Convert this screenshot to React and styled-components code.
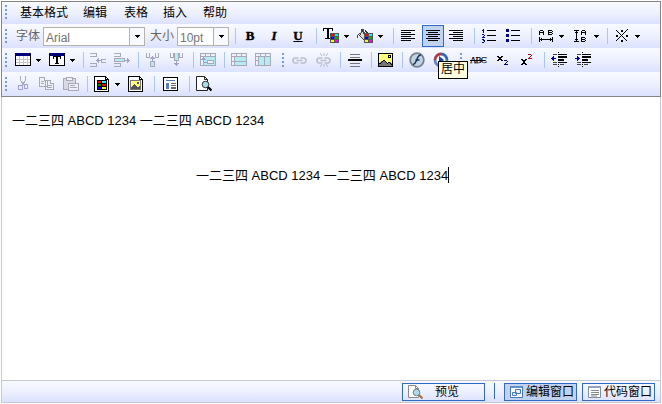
import React from "react";
import styled, { createGlobalStyle, css } from "styled-components";

const Global = createGlobalStyle`
  html, body { margin: 0; background: #fff; }
  * { box-sizing: border-box; }
  body { font-family: "Liberation Sans", "Noto Sans CJK SC", sans-serif; overflow: hidden; }
`;
const Editor = styled.div`
  position: relative; width: 660px; height: 402px; margin: 1px 0 0 1px;
  display: flex; flex-direction: column;
`;
const Toolbars = styled.header`
  border: 1px solid #858585; height: 96px; display: flex; flex-direction: column;
`;
const band = css`background: linear-gradient(#f9faff, #eceffe 55%, #dbe1ff);`;
const Row = styled.div`
  ${band}
  height: ${p => p.$h || 24}px; display: flex; align-items: flex-start; flex: none;
  padding: ${p => p.$top ?? 4}px 0 0 3px;
`;
const Grip = styled.i`
  width: 2px; height: 14px; margin: 1px 0 0 ${p => p.$gap || 0}px; flex: none;
  background: repeating-linear-gradient(#7698df 0 2px, transparent 2px 4px);
`;
const Sep = styled.i`
  width: 1px; height: 16px; flex: none; margin-left: ${p => p.$gap}px; background: #a9c6f5;
`;
const Svg = styled.svg`
  width: 16px; height: 16px; flex: none; margin-left: ${p => p.$gap || 0}px; display: block;
`;
const MenuItem = styled.span`
  font-size: 12px; line-height: 18px; height: 16px; margin-left: ${p => p.$gap}px;
  width: ${p => p.$w}px; white-space: nowrap; color: #000; flex: none;
`;
const Label = styled(MenuItem)`color: #666; line-height: 17px;`;
const Select = styled.div`
  width: ${p => p.$w}px; height: 19px; margin: -1px 0 0 ${p => p.$gap}px; flex: none;
  border: 1px solid #b5b2a8; background: #fff; display: flex; font-size: 12px; line-height: 20px; color: #737373;
`;
const Value = styled.span`flex: 1; padding-left: 2px;`;
const Drop = styled.span`
  width: 15px; border-left: 1px solid #b5b2a8; display: flex; justify-content: center; padding-top: 7px;
  background: #f7f9ff;
`;
const ArrowSvg = styled.svg`
  width: 5px; height: 3px; flex: none; margin: ${p => p.$top ?? 7}px 0 0 ${p => p.$gap || 0}px; display: block;
`;
const Glyph = styled.span`
  font: bold 13px/16px "Liberation Serif", serif; width: 10px; height: 16px; text-align: center; flex: none;
  margin-left: ${p => p.$gap}px; -webkit-text-stroke: .4px #000;
  font-style: ${p => (p.$italic ? "italic" : "normal")};
  text-decoration: ${p => (p.$underline ? "underline" : "none")};
`;
const Active = styled.span`
  width: 22px; height: 22px; margin: -3px 0 0 ${p => p.$gap}px; padding: 2px 3px; flex: none;
  border: 1px solid #316ac5; background: #c1d2ee;
`;
const Content = styled.main`
  height: 283px; border: 1px solid #c4c8d6; border-top: 0; border-bottom: 0; background: #fff;
  font-size: 13px; line-height: 16px; color: #000; white-space: nowrap; padding: 16px 0 0 10px;
`;
const Line = styled.p`
  margin: 0; height: 55px; padding-left: ${p => p.$indent || 0}px; display: flex;
`;
const Caret = styled.i`width: 1px; height: 16px; margin-top: -1px; background: #000;`;
const Status = styled.footer`
  ${band}
  height: 23px; border: 1px solid #c4c8d6; display: flex; padding: 2px 5px 0; justify-content: flex-end;
`;
const Tab = styled.button`
  width: ${p => p.$w}px; height: 18px; border: 1px solid #316ac5; margin: 0 0 0 ${p => p.$gap}px;
  background: ${p => (p.$on ? "#c1d2ee" : "transparent")}; padding: 0 0 0 ${p => p.$pad}px;
  font: 12px/16px "Liberation Sans", "Noto Sans CJK SC", sans-serif; color: #000;
  display: flex; white-space: nowrap; flex: none;
`;
const TabText = styled.span`margin-left: ${p => p.$gap}px; line-height: 17px;`;
const Divider = styled.i`width: 1px; height: 16px; margin: 0 0 0 9px; background: #316ac5;`;
const Tip = styled.div`
  position: absolute; left: 437px; top: 60px; width: 30px; height: 18px; border: 1px solid #000;
  background: #ffffe1; font-size: 12px; line-height: 15px; text-align: center;
`;

const Icon = ({ gap, smooth, children }) => (
  <Svg $gap={gap} viewBox="0 0 16 16" fill="none" stroke="#000"
    shapeRendering={smooth ? "auto" : "crispEdges"}>{children}</Svg>
);
const Arrow = ({ gap, top }) => (
  <ArrowSvg $gap={gap} $top={top} viewBox="0 0 5 3" shapeRendering="crispEdges">
    <path d="M0 0h5v1H4v1H3v1H2V2H1V1H0z" />
  </ArrowSvg>
);
const G = "#a9a9b6", C = "#b4ecf5", V = "#a3a0d2";

const Swatches = ({ x, y }) => (
  <g stroke="none" transform={`translate(${x} ${y})`}>
    <path fill="#555" d="M0 0h9v10H0z" />
    <path fill="#f00" d="M1 1h3v2H1z" /><path fill="#0ff" d="M5 1h3v2H5z" />
    <path fill="#00f" d="M1 4h3v2H1z" /><path fill="#0b0" d="M5 4h3v2H5z" />
    <path fill="#ff0" d="M1 7h3v2H1z" /><path fill="#f0f" d="M5 7h3v2H5z" />
  </g>
);
const TextColor = p => <Icon {...p}>
  <path fill="#000" stroke="none" d="M0 0h10v3H9V1H6v9h2v1H2v-1h2V1H1v2H0z" /><Swatches x={7} y={5} />
</Icon>;
const Bucket = p => <Icon {...p}>
  <path stroke="none" fill="#ddd" d="M5 2l5 5-4 4-4-4z" />
  <path stroke="#444" d="M4.500 5V1.500h2V6M5.500 3l5 5-4 3.500-4-4zM3 5L.5 7.500V10" />
  <path d="M8 2.500l3 3" strokeWidth="1.500" stroke="#333" /><Swatches x={7} y={5} />
</Icon>;
const Align = ({ gap, kind }) => {
  const s = kind === "left" ? 0 : kind === "center" ? 2 : 4;
  return <Icon gap={gap}><path d={`M0 2.500h14M${s} 4.500h10M0 6.500h14M${s} 8.500h10M0 10.500h14M${s} 12.500h10`} /></Icon>;
};
const Ordered = p => <Icon {...p}>
  <path d="M5 2.500h9M5 7.500h9M5 12.500h9" />
  <path stroke="#00008b" d="M1.500 1v4M0 2.500h1M0 6.500h2M2.500 7v1M1.500 8v1M0 9.500h3M0 11.500h2M2.500 12v1M1 12.500h1M2.500 13v1M0 14.500h2" />
</Icon>;
const Bullets = p => <Icon {...p}>
  <path d="M5 2.500h9M5 7.500h9M5 12.500h9" />
  <path fill="#00008b" stroke="none" d="M0 1h3v3H0zM0 6h3v3H0zM0 11h3v3H0z" />
</Icon>;
const AB = ({ x = 0, y = 0, bx = 9, by = 0 }) => <>
  <path d={`M${x + 1} ${y + 0.5}h3M${x + 0.5} ${y + 1}v4M${x + 4.500} ${y + 1}v4M${x + 1} ${y + 2.500}h3`} />
  <path d={`M${bx} ${by + 0.5}h4M${bx + 0.5} ${by}v5M${bx + 4.500} ${by + 1}v1M${bx + 4.500} ${by + 3}v1M${bx} ${by + 2.500}h4M${bx} ${by + 4.500}h4`} />
</>;
const LetterSpace = p => <Icon {...p}>
  <AB y={2} by={2} /><path d="M.5 9v5M13.500 9v5M1 11.500h12M2.500 10v3M11.500 10v3" />
</Icon>;
const LineHeight = p => <Icon {...p}>
  <AB x={7} y={2} bx={7} by={9} /><path d="M0 2.500h5M0 13.500h5M2.500 3v10M1 4.500h3M1 11.500h3" />
</Icon>;
const Special = p => <Icon {...p}>
  <path d="M1.500 2.500h1M2.500 3.500h1M3.500 4.500h1M4.500 5.500h1M5.500 6.500h1M6.500 7.500h1M7.500 8.500h1M8.500 9.500h1M9.500 10.500h1M10.500 11.500h1M11.500 12.500h1M12 1.500h1M11.500 2.500h1M10.500 3.500h1M9.500 4.500h1M8.500 5.500h1M7.500 6.500h1M5.500 8.500h1M4.500 9.500h1M3.500 10.500h1M2.500 11.500h1M1.500 12.500h1" transform="translate(-.5 0)" />
  <path fill="#000" stroke="none" d="M6 2h2v2H6zM6 12h2v2H6zM1 7h2v2H1zM11 7h2v2h-2z" />
</Icon>;
const TableFrame = ({ letter }) => <>
  <path stroke="none" fill="#fff" d="M0 1h16v13H0z" />
  {!letter && <path stroke="#c6c6c6" d="M4.500 4v9M8.500 4v9M12.500 4v9M1 7.500h14M1 10.500h14" />}
  <path d="M.5 1.500h15v12H.5z" /><path stroke="none" fill="#00007b" d="M1 1h14v3H1z" />
</>;
const Table = p => <Icon {...p}><TableFrame /></Icon>;
const TextBox = p => <Icon {...p}><TableFrame letter />
  <path stroke="none" fill="#000" d="M4 4h8v3h-1V5H9v6h1v1H6v-1h1V5H5v2H4z" /></Icon>;
const InsertCell = ({ gap, fill }) => <Icon gap={gap}>
  <path stroke={G} d="M0 1.500h6.500v3H0M0 11.500h6.500v3H0" />
  {fill ? <>
    <path stroke={G} fill={C} d="M.5 6.500h10v3H.5z" /><path stroke={V} d="M11 8.500h5M14.500 7v3M13.500 6v5" />
  </> : <>
    <path stroke={G} d="M16 7.500h-4.500v3h4.500" />
    <path stroke={V} d="M6 8.500h5M7.500 7v3M8.500 6v5" />
  </>}
</Icon>;
const SplitCell = ({ gap, down }) => <Icon gap={gap}>
  <path stroke={G} d={down ? "M.5 1v4h3V1M9.500 1v4h3V1M4.500 1v7h4V1" : "M.5 1v4h3V1M9.500 1v4h3V1M4.500 9.500h4v5h-4z"} />
  <path stroke="none" fill={C} d={down ? "M5 1h3v7H5z" : "M5 10h3v4H5z"} />
  <path stroke={V} d={down ? "M6.500 9v5M4 11.500h5M5 12.500h3" : "M6.500 4v6M4 6.500h5M5 5.500h3"} />
</Icon>;
const TableOp = ({ gap, kind }) => <Icon gap={gap}>
  <path fill="#edf1fc" stroke={G} d="M.5 1.500h15v12H.5z" />
  <path stroke="none" fill={C} d="M4 5h11v8H4z" />
  <path stroke={G} d="M1 4.500h14M5.500 1v3M10.500 1v3M3.500 4v9" />
  {kind === "cell" && <>
    <path stroke={G} fill="#edf1fc" d="M7.500 8.500h6v3h-6z" />
    <path stroke={V} d="M3.500 5v5h3M1 7.500h5M2 6.500h3" /></>}
  {kind === "row" && <path stroke={G} d="M1 9.500h14" />}
  {kind === "col" && <path stroke={G} d="M9.500 4v9M1 8.500h3" />}
</Icon>;
const Link = ({ gap, broken }) => <Icon gap={gap} smooth>
  <g stroke="#b8bfd1" strokeWidth="1.600">
    <path d="M6.500 11H3.500a2.500 2.500 0 0 1 0-5h3M8.500 6h3a2.500 2.500 0 0 1 0 5h-3M4.500 8.500h6" />
    {broken && <path strokeWidth="1" d="M4 1l2 3M8 1v3M12 1l-2 3M4 15l2-3M8 15v-3M12 15l-2-3" />}
  </g>
</Icon>;
const Rule = p => <Icon {...p}>
  <path stroke="#777" d="M2 2.500h10M2 5.500h10M2 11.500h10M2 14.500h10" /><path strokeWidth="2" d="M0 8h14" />
</Icon>;
const Picture = p => <Icon {...p}>
  <path fill="#ffff78" d="M.5 1.500h14v13H.5z" /><path fill="#fff" d="M10.500 3.500h2v2h-2z" />
  <path fill="#777" stroke="none" d="M1 14v-3l5-3 4 3 2-1 2 2v2z" /><path d="M1 11.500h2M3 10.500h1M4 9.500h1M5 8.500h2M7 9.500h1M8 10.500h1M9 11.500h1M10 10.500h2M12 11.500h1M13 12.500h1" />
</Icon>;
const Flash = p => <Icon {...p} smooth>
  <circle cx="8" cy="8" r="6.800" fill="#c3d3e4" stroke="#75838f" strokeWidth="1.800" />
  <path d="M12 3c-3-.3-3.500 3-4.500 5.500S6 12 4 12.500M6.500 8h4" stroke="#173654" strokeWidth="1.600" />
</Icon>;
const Media = p => <Icon {...p} smooth>
  <circle cx="8" cy="8" r="5" fill="#fff" stroke="none" />
  <g strokeWidth="2.800"><path stroke="#ac3c4a" d="M2 8a6 6 0 0 1 6-6" /><path stroke="#2e68be" d="M8 2a6 6 0 0 1 6 6" />
    <path stroke="#4c9b69" d="M14 8a6 6 0 0 1-6 6" /><path stroke="#6384bd" d="M8 14a6 6 0 0 1-6-6" /></g>
  <path d="M6 4l5 4-5 4z" fill="#1746a5" stroke="none" />
</Icon>;
const Strike = styled.span`
  font: 9px/16px "Liberation Serif", serif; letter-spacing: -.9px; width: 16px; flex: none; height: 16px;
  margin-left: ${p => p.$gap}px; text-decoration: line-through; -webkit-text-stroke: .25px #000;
`;
const Script = ({ gap, up }) => <Icon gap={gap}>
  <path d={up ? "M0 7.500h2M4 7.500h2M1 8.500h4M2 9.500h2M2 10.500h2M1 11.500h4M0 12.500h2M4 12.500h2" : "M0 4.500h2M4 4.500h2M1 5.500h4M2 6.500h2M1 7.500h4M0 8.500h2M4 8.500h2"} />
  <path stroke={up ? "#b00000" : "#00008b"} transform={up ? "translate(0 -6)" : ""} d="M7 8.500h3M10.500 9v1M9 10.500h1M8 11.500h1M7 12.500h4" />
</Icon>;
const Indent = ({ gap, inward }) => <Icon gap={gap}>
  <path d="M7.500 0v1M7.500 12v1M7.500 14v1" />
  <path stroke="#444" d="M2 2.500h4M2 10.500h4M2 12.500h4M9 12.500h4" />
  <path d="M7 2.500h9M7 10.500h9" /><path d="M7 5h9M7 8h6" strokeWidth="2" />
  <path stroke="#0000a0" d={inward ? "M0 6.500h5M2.500 4v5M3.500 5v3" : "M0 6.500h5M2.500 4v5M1.500 5v3"} />
</Icon>;
const Cut = p => <Icon {...p}>
  <path stroke={G} d="M2.500 0v4l3 5M7.500 0v4l-3 5" /><path stroke={V} d="M1 9.500h3v4H.5v-4zM6.500 8.500h3v4h-3z" />
</Icon>;
const Copy = p => <Icon {...p}>
  <g stroke={G} fill="#f0f2fb"><path d="M.5 1.500h5l3 3v6h-8zM6.500 4.500h5l3 3v6h-8z" />
    <path d="M5.500 1v3h3M11.500 4v3h3M2 5.500h3M2 7.500h3M8 9.500h5M8 11.500h5" /></g>
</Icon>;
const Paste = p => <Icon {...p}>
  <g stroke={G}><path fill="#d8d9e4" d="M.5 2.500h12v11H.5z" /><path fill="#eef" d="M3.500 1.500h6v3h-6zM5.500 7.500h10v7h-10z" /><path d="M7 9.500h5M7 11.500h7" /></g>
</Icon>;
const Page = () => <><path fill="#fff" d="M.5.5h11l3 3v12H.5z" /><path d="M11.500.5v3h3" /></>;
const PageColor = p => <Icon {...p}><Page /><path stroke="none" fill="#000" d="M3 4h10v10H3z" />
  <g stroke="none"><path fill="#f00" d="M4 5h3v2H4z" /><path fill="#0ff" d="M8 5h4v2H8z" />
    <path fill="#080" d="M4 8h3v2H4z" /><path fill="#f00" d="M8 8h4v2H8z" />
    <path fill="#00f" d="M4 11h3v2H4z" /><path fill="#ff0" d="M8 11h4v2H8z" /></g></Icon>;
const PageImage = p => <Icon {...p}><Page />
  <path fill="#ffff80" stroke="#777" d="M2.500 4.500h10v9h-10z" /><path fill="#555" stroke="none" d="M3 13v-2l3-3 4 3 2-1v3zM9 6h2v2H9z" /></Icon>;
const Form = p => <Icon {...p}>
  <path fill="#fff" d="M.5 1.500h14v13H.5z" /><path stroke="#4f78b0" d="M3 4.500h9" />
  <path stroke="none" fill="#5881bb" d="M3 7h3v6H3z" /><path stroke="#666" d="M8 7.500h5M8 9.500h5M8 11.500h5M8 12.500h5" />
</Icon>;
const Preview = ({ gap, soft }) => <Icon gap={gap} smooth>
  <path fill="#fff" stroke={soft ? "#8a8a8a" : "#222"} d={soft ? "M1.500 1.500h7l3 3v9h-10zM8.500 1.500v3h3" : "M.5.5h8l3 3v11H.5zM8.500.5v3h3"} />
  <circle cx="9.500" cy="8.500" r="3.300" fill="#a8dce9" stroke={soft ? "#70818e" : "#333"} />
  <path stroke={soft ? "#b37143" : "#000"} strokeWidth="2.200" d="M12 11l3.500 3.500" />
</Icon>;
const WindowIcon = ({ code }) => <Icon smooth>
  <path fill="#fff" stroke={code ? "#7f8fa3" : "#4776b9"} d="M1.500 2.500h12v11h-12z" /><path stroke={code ? "#8ea5c2" : "#5c91d7"} strokeWidth="2" d="M2 3h11" />
  {code ? <path stroke="#8a8a8a" d="M4 6.500h8M4 8.500h8M4 10.500h8M4 12h6" /> : <path fill="#e8f1ff" stroke="#4776b9" d="M6.500 5.500h5v4h-5zM3.500 8.500h4v3h-4z" />}
</Icon>;

export default function App() {
  const sample = "一二三四 ABCD 1234 一二三四 ABCD 1234";
  return <><Global /><Editor>
    <Toolbars>
      <Row $h={22} $top={2}><Grip /><MenuItem $gap={13} $w={48}>基本格式</MenuItem>
        <MenuItem $gap={15} $w={24}>编辑</MenuItem><MenuItem $gap={17} $w={24}>表格</MenuItem>
        <MenuItem $gap={15} $w={24}>插入</MenuItem><MenuItem $gap={16} $w={24}>帮助</MenuItem></Row>
      <Row><Grip /><Label $gap={9} $w={24}>字体</Label>
        <Select $gap={3} $w={102}><Value>Arial</Value><Drop><Arrow top={0} /></Drop></Select>
        <Label $gap={5} $w={24}>大小</Label>
        <Select $gap={3} $w={52}><Value>10pt</Value><Drop><Arrow top={0} /></Drop></Select>
        <Sep $gap={6} /><Glyph $gap={9}>B</Glyph><Glyph $gap={14} $italic>I</Glyph><Glyph $gap={14} $underline>U</Glyph>
        <Sep $gap={13} /><TextColor gap={6} /><Arrow gap={5} /><Bucket gap={8} /><Arrow gap={5} />
        <Sep $gap={10} /><Align kind="left" gap={7} /><Active $gap={5}><Align kind="center" /></Active><Align kind="right" gap={5} />
        <Sep $gap={9} /><Ordered gap={7} /><Bullets gap={8} /><Sep $gap={9} />
        <LetterSpace gap={7} /><Arrow gap={4} /><LineHeight gap={10} /><Arrow gap={4} />
        <Sep $gap={8} /><Special gap={7} /><Arrow gap={4} /></Row>
      <Row><Grip /><Table gap={8} /><Arrow gap={5} /><TextBox gap={8} /><Arrow gap={5} />
        <Sep $gap={8} /><InsertCell gap={6} /><InsertCell fill gap={8} /><Sep $gap={8} />
        <SplitCell gap={7} /><SplitCell down gap={8} /><Sep $gap={7} /><TableOp kind="cell" gap={6} />
        <Sep $gap={8} /><TableOp kind="row" gap={6} /><TableOp kind="col" gap={8} /><Grip $gap={11} />
        <Link gap={8} /><Link broken gap={8} /><Sep $gap={8} /><Rule gap={7} /><Sep $gap={7} />
        <Picture gap={6} /><Sep $gap={8} /><Flash gap={6} /><Media gap={8} /><Grip $gap={11} />
        <Strike $gap={8}>ABC</Strike><Script gap={11} /><Script up gap={8} /><Sep $gap={7} />
        <Indent gap={6} /><Indent inward gap={8} /></Row>
      <Row><Grip /><Cut gap={11} /><Copy gap={5} /><Paste gap={8} /><Sep $gap={8} />
        <PageColor gap={6} /><Arrow gap={5} /><PageImage gap={8} /><Sep $gap={10} /><Form gap={8} />
        <Sep $gap={10} /><Preview gap={6} /></Row>
    </Toolbars>
    <Content><Line>{sample}</Line><Line $indent={184}>{sample}<Caret /></Line></Content>
    <Status>
      <Tab $w={83} $pad={4}><Preview soft /><TabText $gap={12}>预览</TabText></Tab><Divider />
      <Tab $w={73} $pad={4} $gap={9} $on><WindowIcon /><TabText $gap={1}>编辑窗口</TabText></Tab>
      <Tab $w={73} $pad={4} $gap={5}><WindowIcon code /><TabText $gap={1}>代码窗口</TabText></Tab>
    </Status>
    <Tip>居中</Tip>
  </Editor></>;
}
